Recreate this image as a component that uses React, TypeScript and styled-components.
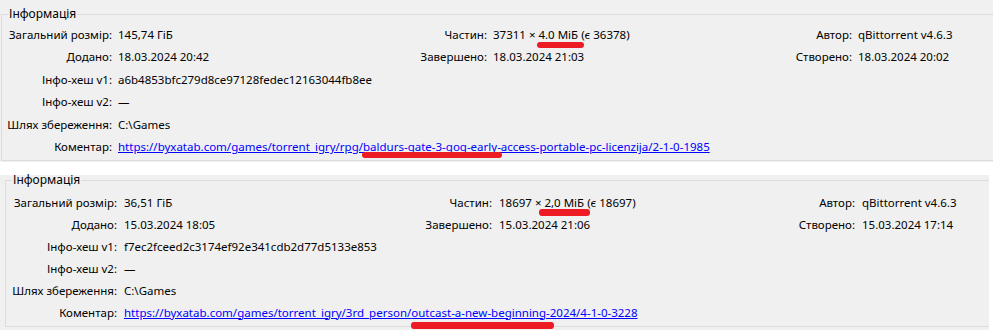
import styled, { createGlobalStyle } from 'styled-components';

const GlobalStyle = createGlobalStyle`
  html, body {
    margin: 0;
    padding: 0;
    background: #ffffff;
  }
  body {
    font-family: "Noto Sans", "Liberation Sans", sans-serif;
    font-size: 11.5px;
    color: #000;
  }
`

const Page = styled.div`
  display: flex;
  flex-direction: column;
  width: 993px;
  height: 330px;
  overflow: hidden;
`

const Shot = styled.div<{ $w: number; $h: number; $mt: number }>`
  width: ${p => p.$w}px;
  height: ${p => p.$h}px;
  margin-top: ${p => p.$mt}px;
  background: #f0f0f0;
  display: flex;
  flex-direction: column;
  flex-shrink: 0;
`

const GroupBox = styled.fieldset<{ $x: number; $top: number; $pt: number; $pb: number }>`
  margin: ${p => p.$top}px 0 0 ${p => p.$x}px;
  padding: ${p => p.$pt}px 0 ${p => p.$pb}px 0;
  border: 1px solid #dcdcdc;
  border-right: none;
  min-width: 0;
`

const Legend = styled.legend`
  margin-left: 6px;
  padding: 0 1px;
  line-height: 10px;
  font-size: 12px;
`

const InfoGrid = styled.div<{ $cols: string; $rowH: number }>`
  display: grid;
  grid-template-columns: ${p => p.$cols};
  grid-auto-rows: ${p => p.$rowH}px;
  align-items: center;
  white-space: nowrap;
`

const Label = styled.div`
  text-align: right;
`

const Value = styled.div<{ $pad: number; $wide?: boolean }>`
  padding-left: ${p => p.$pad}px;
  ${p => p.$wide && 'grid-column: 2 / -1;'}
`

const Link = styled.a`
  color: #0000ff;
  text-decoration: underline;
`

// red marker strokes drawn over the screenshot text
const Mark = styled.span<{ $l: number; $r: number; $t: number; $h: number }>`
  position: relative;
  &::after {
    content: '';
    position: absolute;
    left: ${p => p.$l}px;
    right: ${p => p.$r}px;
    top: ${p => p.$t}px;
    height: ${p => p.$h}px;
    background: #ed1c24;
    border-radius: 3px;
  }
`

type Info = {
  size: string
  pieces: string
  pieceSize: string
  pieceRest: string
  author: string
  added: string
  completed: string
  created: string
  hash1: string
  path: string
  linkHead: string
  linkMarked: string
  linkTail: string
}

type Geometry = {
  w: number
  h: number
  mt: number
  x: number
  top: number
  pt: number
  pb: number
  cols: string
  rowH: number
  pad: number
  sizeMark: [number, number, number, number]
  linkMark: [number, number, number, number]
}

const TorrentInfo = ({ info, g }: { info: Info; g: Geometry }) => (
  <Shot $w={g.w} $h={g.h} $mt={g.mt}>
    <GroupBox $x={g.x} $top={g.top} $pt={g.pt} $pb={g.pb}>
      <Legend>Інформація</Legend>
      <InfoGrid $cols={g.cols} $rowH={g.rowH}>
        <Label>Загальний розмір:</Label>
        <Value $pad={g.pad}>{info.size}</Value>
        <Label>Частин:</Label>
        <Value $pad={g.pad}>
          {info.pieces} × <Mark $l={g.sizeMark[0]} $r={g.sizeMark[1]} $t={g.sizeMark[2]} $h={g.sizeMark[3]}>{info.pieceSize}</Mark> {info.pieceRest}
        </Value>
        <Label>Автор:</Label>
        <Value $pad={g.pad}>{info.author}</Value>

        <Label>Додано:</Label>
        <Value $pad={g.pad}>{info.added}</Value>
        <Label>Завершено:</Label>
        <Value $pad={g.pad}>{info.completed}</Value>
        <Label>Створено:</Label>
        <Value $pad={g.pad}>{info.created}</Value>

        <Label>Інфо-хеш v1:</Label>
        <Value $pad={g.pad} $wide>{info.hash1}</Value>

        <Label>Інфо-хеш v2:</Label>
        <Value $pad={g.pad} $wide>—</Value>

        <Label>Шлях збереження:</Label>
        <Value $pad={g.pad} $wide>{info.path}</Value>

        <Label>Коментар:</Label>
        <Value $pad={g.pad} $wide>
          <Link href="#">
            {info.linkHead}
            <Mark $l={g.linkMark[0]} $r={g.linkMark[1]} $t={g.linkMark[2]} $h={g.linkMark[3]}>{info.linkMarked}</Mark>
            {info.linkTail}
          </Link>
        </Value>
      </InfoGrid>
    </GroupBox>
  </Shot>
)

const baldursGate: Info = {
  size: '145,74 ГіБ',
  pieces: '37311',
  pieceSize: '4.0 МіБ',
  pieceRest: '(є 36378)',
  author: 'qBittorrent v4.6.3',
  added: '18.03.2024 20:42',
  completed: '18.03.2024 21:03',
  created: '18.03.2024 20:02',
  hash1: 'a6b4853bfc279d8ce97128fedec12163044fb8ee',
  path: 'C:\\Games',
  linkHead: 'https://byxatab.com/games/torrent_igry/rpg/',
  linkMarked: 'baldurs-gate-3-gog-early',
  linkTail: '-access-portable-pc-licenzija/2-1-0-1985',
}

const outcast: Info = {
  size: '36,51 ГіБ',
  pieces: '18697',
  pieceSize: '2,0 МіБ',
  pieceRest: '(є 18697)',
  author: 'qBittorrent v4.6.3',
  added: '15.03.2024 18:05',
  completed: '15.03.2024 21:06',
  created: '15.03.2024 17:14',
  hash1: 'f7ec2fceed2c3174ef92e341cdb2d77d5133e853',
  path: 'C:\\Games',
  linkHead: 'https://byxatab.com/games/torrent_igry/3rd_person/',
  linkMarked: 'outcast-a-new-beginning',
  linkTail: '-2024/4-1-0-3228',
}

const firstShot: Geometry = {
  w: 993, h: 162, mt: 0,
  x: 1, top: 9, pt: 4, pb: 2,
  cols: '110px 289px 86px 294px 71px 1fr',
  rowH: 22.5, pad: 6,
  sizeMark: [-1, -6, 15, 6],
  linkMark: [-1, -5, 13, 6],
}

const secondShot: Geometry = {
  w: 989, h: 155, mt: 13,
  x: 5, top: 0, pt: 6, pb: 3,
  cols: '111px 284px 91px 289px 74px 1fr',
  rowH: 22, pad: 7,
  sizeMark: [-5, -6, 14, 7],
  linkMark: [0, -8, 17, 7],
}

const App = (): JSX.Element => {
  return (
    <>
      <GlobalStyle />
      <Page>
        <TorrentInfo info={baldursGate} g={firstShot} />
        <TorrentInfo info={outcast} g={secondShot} />
      </Page>
    </>
  )
}

export default App
